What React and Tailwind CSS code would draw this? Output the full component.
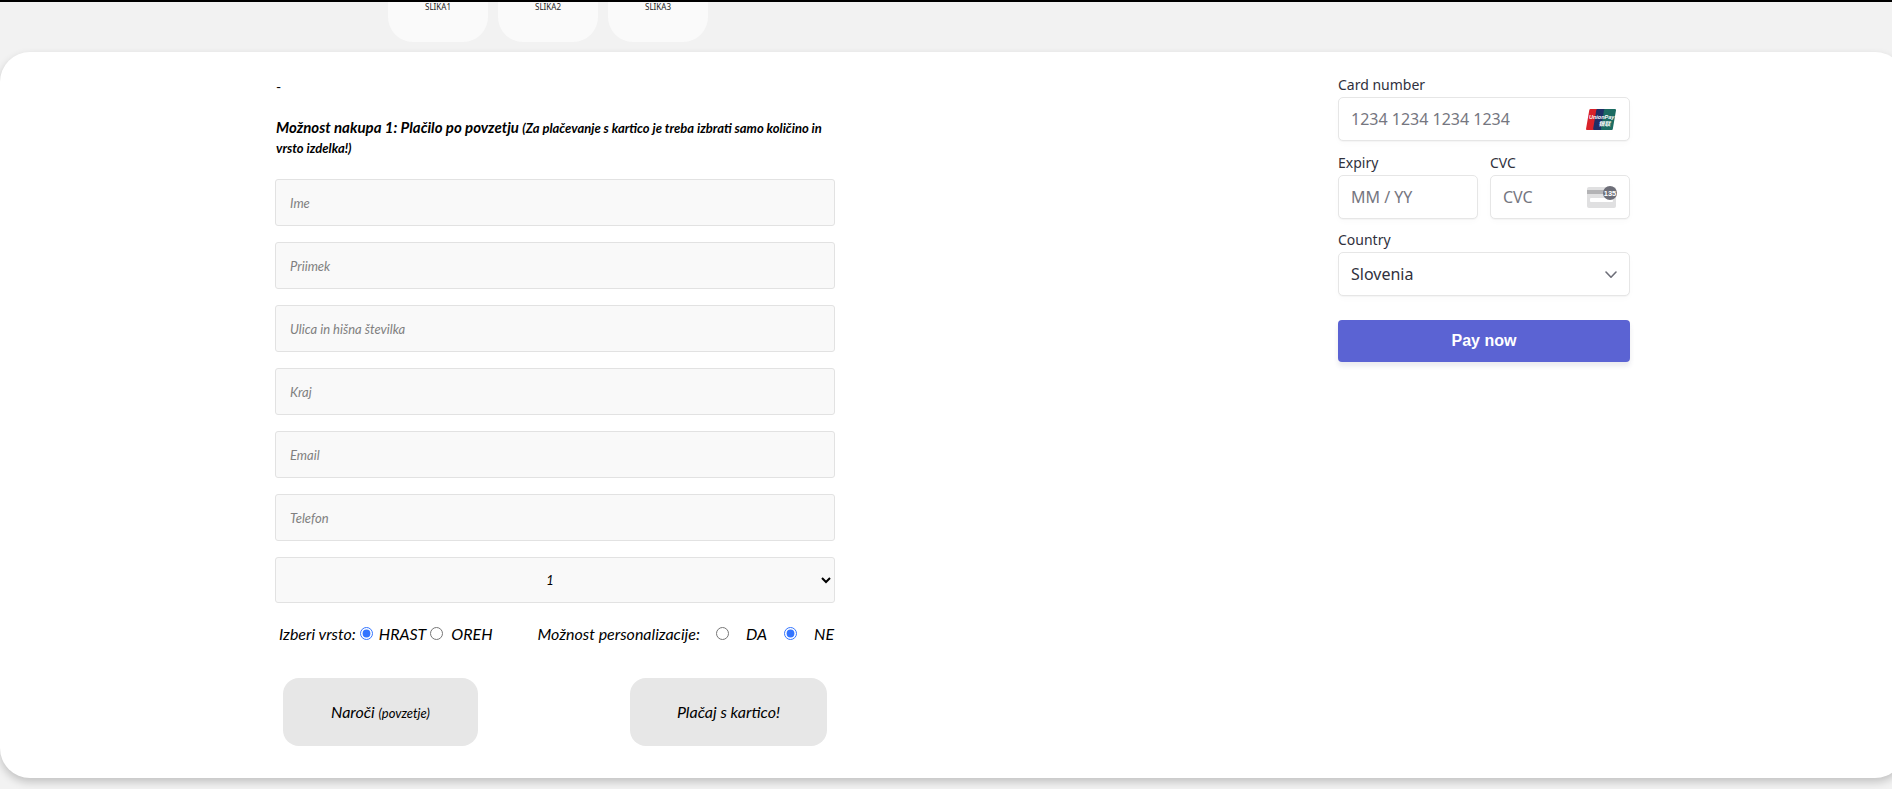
import React from "react";

const textFields = [
  { id: "ime", label: "Ime", type: "text" },
  { id: "priimek", label: "Priimek", type: "text" },
  { id: "ulica", label: "Ulica in hišna številka", type: "text" },
  { id: "kraj", label: "Kraj", type: "text" },
  { id: "email", label: "Email", type: "email" },
  { id: "telefon", label: "Telefon", type: "tel" },
];

function ImageTabs() {
  return (
    <nav className="flex gap-[10px] px-6 xl:pl-[388px]">
      {["SLIKA1", "SLIKA2", "SLIKA3"].map((name) => (
        <a
          key={name}
          href="#slike"
          className="h-10 w-[100px] rounded-b-[25px] bg-[#fafafa] text-center font-['Noto_Sans',sans-serif] text-[8px] leading-[10px] text-[#222]"
        >
          {name}
        </a>
      ))}
    </nav>
  );
}

const radio = "mb-0.5 size-[13px] accent-[#3374ff]";

function OrderForm() {
  return (
    <form className="font-['Lato',sans-serif] text-black italic">
      <p className="pl-px text-sm leading-5 not-italic">-</p>
      <h2 className="mt-5 pl-px text-[15px] leading-5 font-bold">
        Možnost nakupa 1: Plačilo po povzetju{" "}
        <span className="text-[13px] leading-4">
          (Za plačevanje s kartico je treba izbrati samo količino in vrsto izdelka!)
        </span>
      </h2>
      <div className="mt-[22px] flex flex-col gap-4">
        {textFields.map((f) => (
          <input
            key={f.id}
            id={f.id}
            type={f.type}
            aria-label={f.label}
            placeholder={f.label}
            className="h-[47px] w-full rounded-[3px] border border-[#e2e2e2] bg-[#f9f9f9] px-[14px] text-[13px] italic placeholder:text-[#808080]"
          />
        ))}
        <select
          aria-label="Količina"
          defaultValue="1"
          className="h-[46px] w-full rounded-[3px] border border-[#e2e2e2] bg-[#f9f9f9] pr-1 pl-[6px] text-center text-[13px] italic"
        >
          <option>1</option>
          <option>2</option>
          <option>3</option>
        </select>
      </div>
      <div className="mt-[21px] flex justify-between pr-px pl-1 text-base leading-5">
        <fieldset className="flex items-center">
          <legend className="float-left mr-1">Izberi vrsto:</legend>
          <input id="hrast" type="radio" name="vrsta" defaultChecked className={radio} />
          <label htmlFor="hrast" className="mr-1 ml-[6px]">HRAST</label>
          <input id="oreh" type="radio" name="vrsta" className={radio} />
          <label htmlFor="oreh" className="ml-2">OREH</label>
        </fieldset>
        <fieldset className="flex items-center">
          <legend className="float-left mr-4">Možnost personalizacije:</legend>
          <input id="da" type="radio" name="personalizacija" className={radio} />
          <label htmlFor="da" className="mx-[17px]">DA</label>
          <input id="ne" type="radio" name="personalizacija" defaultChecked className={radio} />
          <label htmlFor="ne" className="ml-[17px]">NE</label>
        </fieldset>
      </div>
      <div className="mt-[34px] flex justify-between px-2">
        <button type="submit" className="h-[68px] w-[195px] rounded-2xl bg-[#e7e7e7] text-base italic">
          Naroči <span className="text-[13px]">(povzetje)</span>
        </button>
        <button type="button" className="h-[68px] w-[197px] rounded-2xl bg-[#e7e7e7] text-base italic">
          Plačaj s kartico!
        </button>
      </div>
    </form>
  );
}

function UnionPayIcon() {
  return (
    <svg viewBox="0 0 30 21" className="h-[21px] w-[30px]" aria-hidden="true">
      <path d="M4.5 0H13L9 21H1.2C.3 21-.1 20.400.1 19.500L3.300 1C3.400.400 3.900 0 4.500 0Z" fill="#d9222a" />
      <path d="M11.500 0H20L16 21H8.500C7.500 21 7 20.400 7.200 19.500L10.300 1C10.400.400 10.900 0 11.500 0Z" fill="#1f2f66" />
      <path d="M19 0H29C29.800 0 30.100.500 30 1.200L26.800 20C26.700 20.600 26.200 21 25.500 21H16C15.200 21 14.800 20.400 15 19.600L18 1C18.100.400 18.500 0 19 0Z" fill="#1c6c62" />
      <text x="3" y="9.500" fontFamily="Liberation Sans" fontStyle="italic" fontWeight="700" fontSize="5.500" fill="#fff">UnionPay</text>
      <text x="12.500" y="16.500" fontFamily="Noto Sans CJK SC" fontStyle="italic" fontWeight="700" fontSize="6" fill="#fff">银联</text>
    </svg>
  );
}

function CvcIcon() {
  return (
    <svg viewBox="0 0 30 22" className="h-[22px] w-[30px]" aria-hidden="true">
      <rect x="0" y="1" width="29" height="21" rx="2" fill="#e0e0e1" />
      <rect x="0" y="4" width="29" height="4" fill="#b3b3b5" />
      <rect x="3" y="12" width="23" height="4" rx="1" fill="#fff" />
      <circle cx="23" cy="7" r="7" fill="#6d6e78" />
      <text x="23" y="9.800" textAnchor="middle" fontFamily="Liberation Sans" fontWeight="700" fontSize="7.500" fill="#fff">135</text>
    </svg>
  );
}

const payLabel = "mb-0.5 block text-sm leading-5 text-[#30313d]";
const payField =
  "h-11 w-full rounded-[5px] border border-[#e6e6e6] bg-white px-3 text-base text-[#30313d] shadow-[0_1px_1px_rgba(0,0,0,0.03),0_3px_6px_rgba(0,0,0,0.02)] placeholder:text-[#757680]";

function PaymentForm() {
  return (
    <form className="w-full max-w-[292px] font-['Noto_Sans',sans-serif]">
      <label htmlFor="card" className={payLabel}>Card number</label>
      <div className="relative">
        <input id="card" placeholder="1234 1234 1234 1234" className={payField} />
        <span className="absolute inset-y-0 right-[14px] flex items-center"><UnionPayIcon /></span>
      </div>
      <div className="mt-3 flex gap-3">
        <div className="flex-1">
          <label htmlFor="expiry" className={payLabel}>Expiry</label>
          <input id="expiry" placeholder="MM / YY" className={payField} />
        </div>
        <div className="flex-1">
          <label htmlFor="cvc" className={payLabel}>CVC</label>
          <div className="relative">
            <input id="cvc" placeholder="CVC" className={payField} />
            <span className="absolute inset-y-0 right-[13px] flex items-center"><CvcIcon /></span>
          </div>
        </div>
      </div>
      <div className="mt-[11px]">
        <label htmlFor="country" className={payLabel}>Country</label>
        <div className="relative">
          <select id="country" className={`${payField} appearance-none`}>
            <option>Slovenia</option>
          </select>
          <svg viewBox="0 0 12 8" className="pointer-events-none absolute top-[19px] right-[13px] h-2 w-3" fill="none" stroke="#6d6e78" strokeWidth="1.600" strokeLinecap="round" strokeLinejoin="round" aria-hidden="true">
            <path d="M1 1L6 6.200L11 1" />
          </svg>
        </div>
      </div>
      <button type="submit" className="mt-6 h-[42px] w-full rounded-sm bg-[#5b63d3] font-['Liberation_Sans',sans-serif] text-base font-bold text-white shadow-[0_4px_5px_rgba(50,50,93,0.1)]">
        Pay now
      </button>
    </form>
  );
}

export default function App() {
  return (
    <div className="min-h-screen overflow-hidden border-t-2 border-black bg-[#f2f2f2]">
      <ImageTabs />
      <main className="mt-[10px] -mr-[13px] mb-[11px] flex flex-col justify-between gap-10 rounded-[30px] bg-white px-6 pt-[23px] pb-8 shadow-[0_4px_8px_rgba(0,0,0,0.2)] lg:flex-row xl:px-[275px]">
        <div className="w-full max-w-[560px] pt-0.5">
          <OrderForm />
        </div>
        <PaymentForm />
      </main>
    </div>
  );
}
